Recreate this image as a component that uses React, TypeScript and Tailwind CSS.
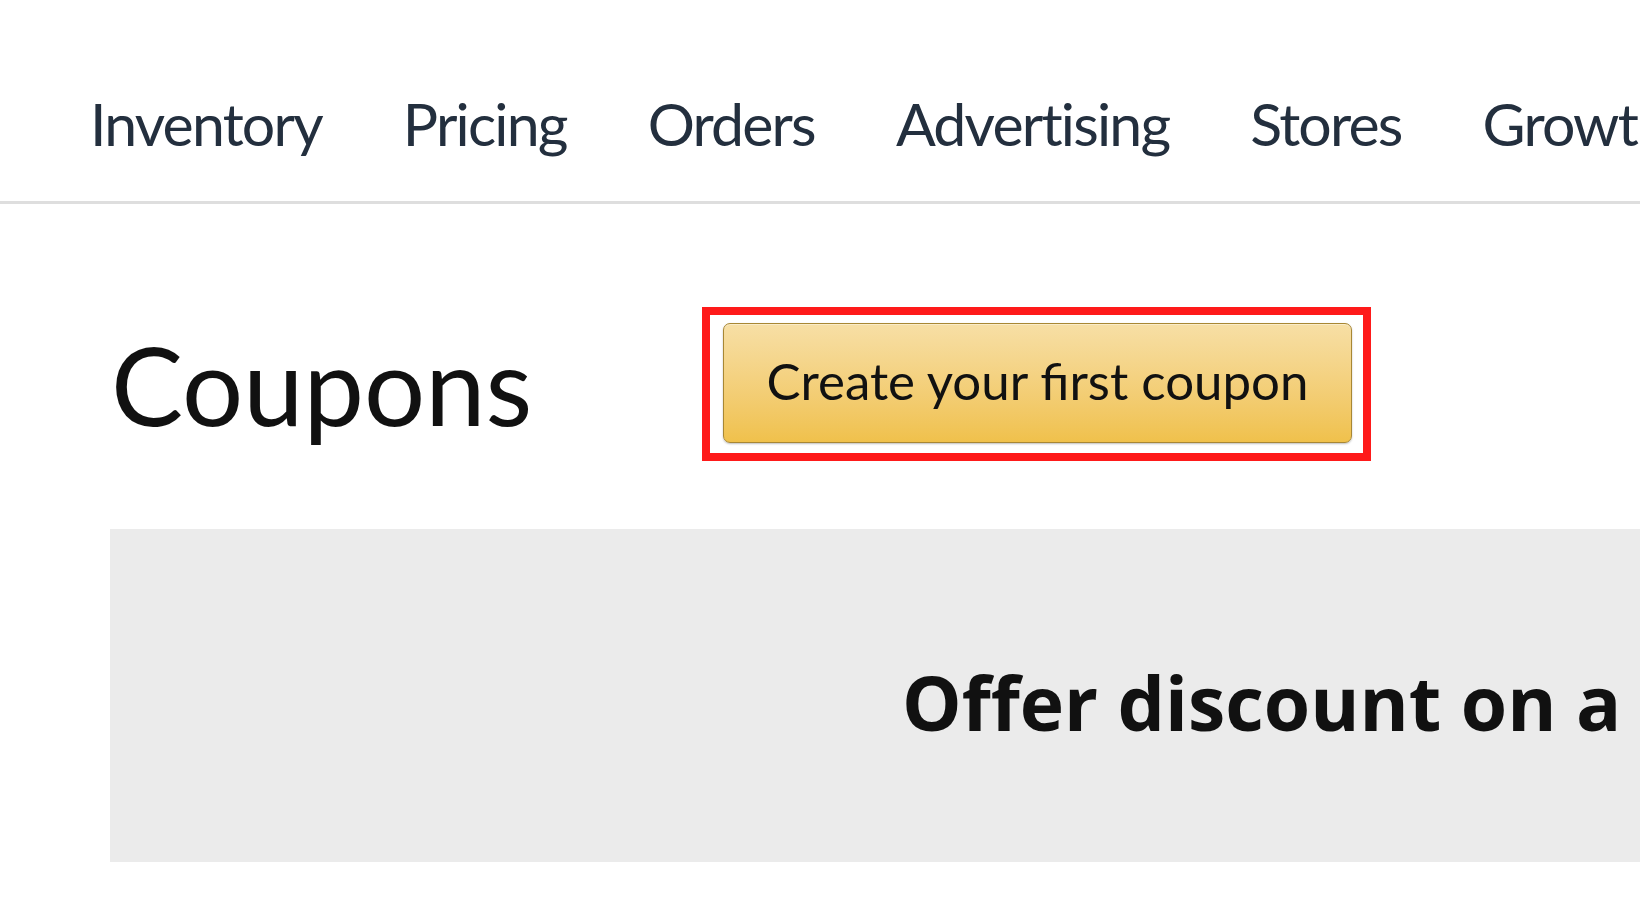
const navItems = ["Inventory", "Pricing", "Orders", "Advertising", "Stores", "Growth"];

export default function App() {
  return (
    <div className="h-[924px] w-[1640px] overflow-hidden bg-white font-['Lato',sans-serif] text-[#111]">
      {/* Top nav */}
      <nav className="flex h-[204px] items-start gap-[81px] whitespace-nowrap border-b-[3px] border-[#dedede] pl-[90px] pt-[94px]">
        {navItems.map((item) => (
          <a key={item} className="text-[59px] leading-none tracking-[-1.8px] text-[#232f3e]">
            {item}
          </a>
        ))}
      </nav>

      {/* Heading row */}
      <div className="mt-[103px] flex items-center pl-[111px]">
        <h1 className="w-[591px] text-[108px] font-normal leading-none">Coupons</h1>
        <div className="border-[8px] border-[#fe1a1a] pb-[10px] pl-[13px] pr-[11px] pt-[8px]">
          <button className="flex h-[120px] w-[629px] items-center justify-center rounded-[7px] border border-[#a88734] bg-linear-to-b from-[#f7dfa5] to-[#f0c14b] pb-[6px] text-[51px] leading-none text-[#111] shadow-[inset_0_1px_0_rgba(255,255,255,0.4),0_1px_2px_rgba(0,0,0,0.25)]">
            Create your first coupon
          </button>
        </div>
      </div>

      {/* Empty state panel */}
      <div className="ml-[110px] mt-[68px] h-[333px] overflow-hidden bg-[#ebebeb] pl-[792px] pt-[136px]">
        <h2 className="whitespace-nowrap font-['Open_Sans',sans-serif] text-[75px] font-bold leading-none text-[#111]">
          Offer discount on a product
        </h2>
      </div>
    </div>
  );
}
